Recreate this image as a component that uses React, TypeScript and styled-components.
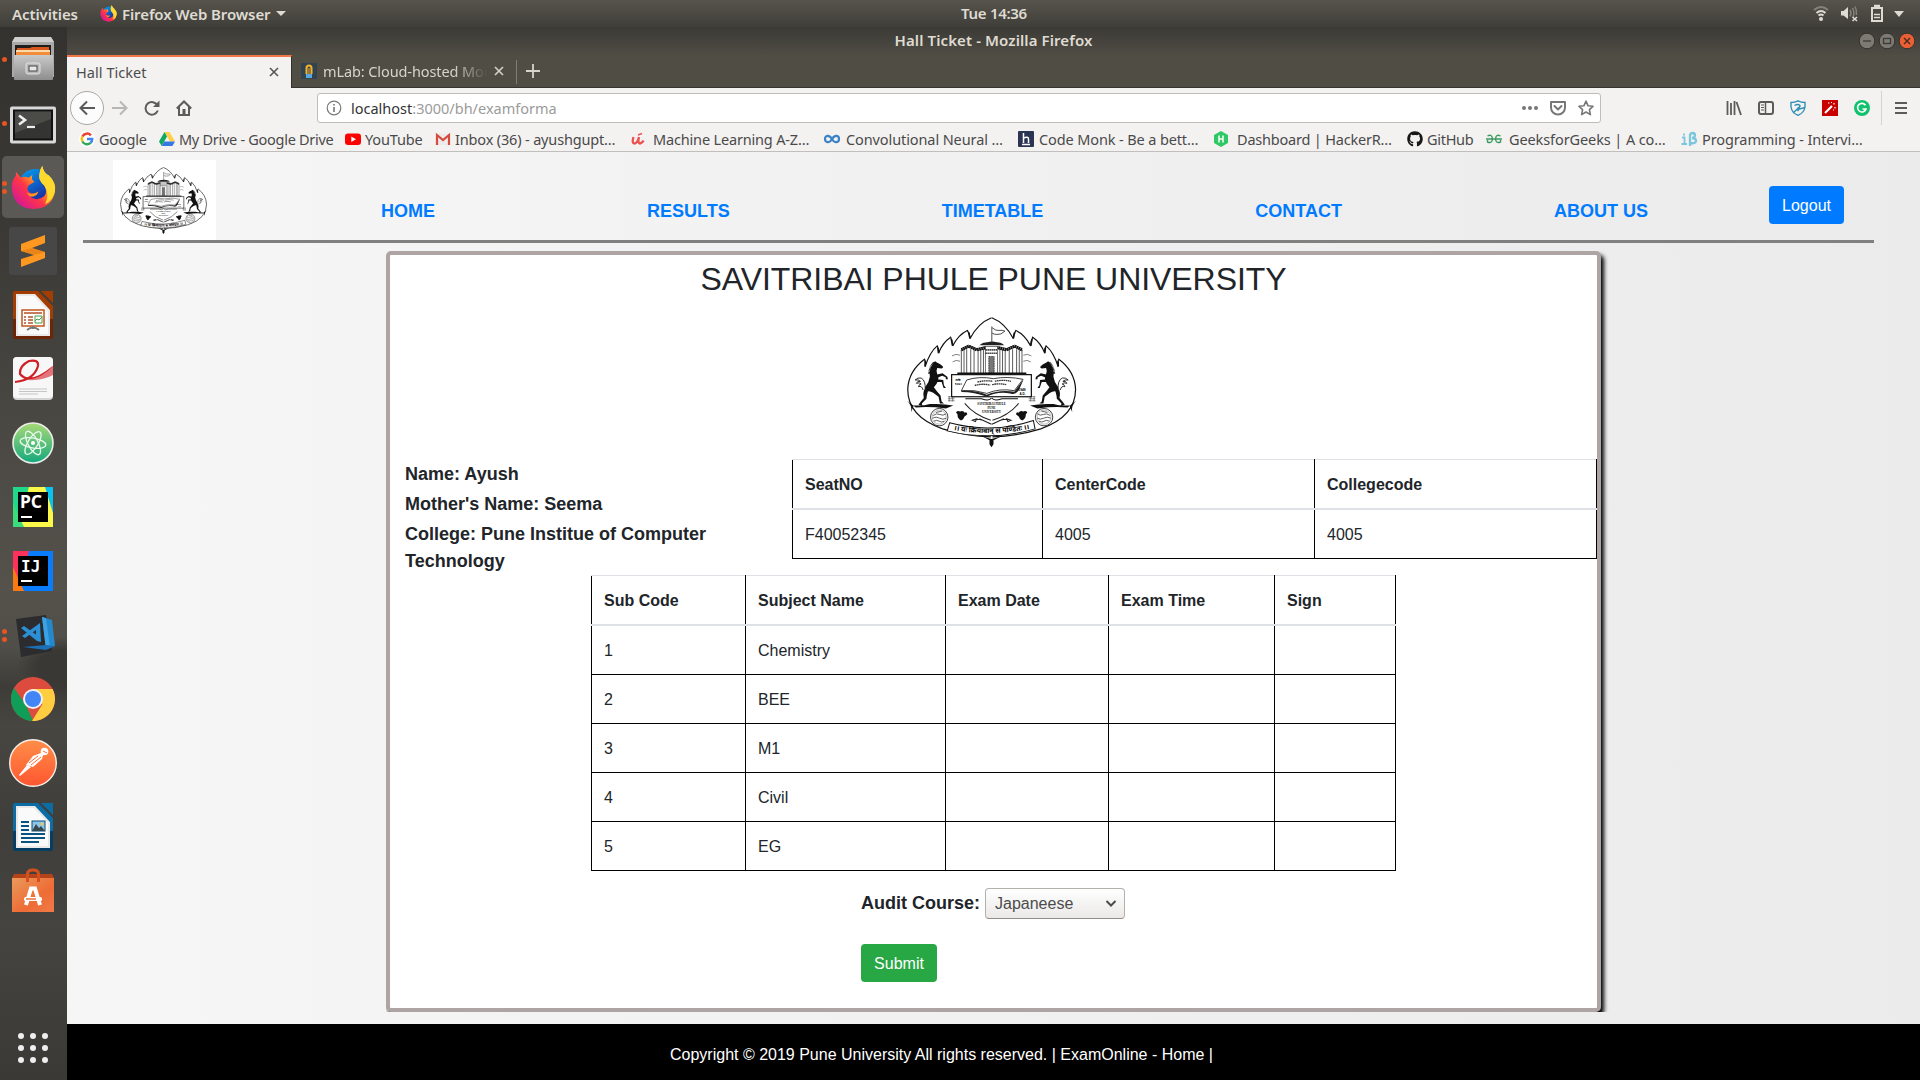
import React from 'react';
import styled, { createGlobalStyle, css } from 'styled-components';
import { FaGithub } from 'react-icons/fa';

const UI = '"Noto Sans", "Open Sans", sans-serif';
const BODY = '"Liberation Sans", Arial, sans-serif';

const GlobalStyle = createGlobalStyle`
  * { box-sizing: border-box; }
  html, body { margin: 0; padding: 0; }
  body { width: 1920px; height: 1080px; overflow: hidden; background: #3c3b37; }
  svg { display: block; flex: none; }
`;

const Desktop = styled.div`
  width: 1920px;
  height: 1080px;
  display: flex;
  flex-direction: column;
  overflow: hidden;
  font-family: ${UI};
`;

/* ---------- system bar ---------- */

const SystemBar = styled.header`
  height: 27px;
  flex: none;
  display: grid;
  grid-template-columns: 894px 200px 1fr;
  align-items: center;
  background: linear-gradient(#57544c, #3f3e39);
  color: #dfdbd2;
  font-weight: 600;
  font-size: 15px;
`;

const BarGroup = styled.div<{ $end?: boolean }>`
  display: flex;
  align-items: center;
  height: 27px;
  padding: ${p => (p.$end ? '0 16px 1px 0' : '0 0 0 12px')};
  justify-content: ${p => (p.$end ? 'flex-end' : 'flex-start')};
`;

const Label = styled.span<{ $w: number; $ls?: number; $ml?: number }>`
  width: ${p => p.$w}px;
  margin-left: ${p => p.$ml ?? 0}px;
  letter-spacing: ${p => p.$ls ?? 0}px;
  white-space: nowrap;
  flex: none;
`;

const Clock = styled.div`
  text-align: center;
  white-space: nowrap;
  letter-spacing: -0.3px;
  padding-bottom: 2px;
`;

const Caret = styled.span<{ $ml: number }>`
  margin-left: ${p => p.$ml}px;
  border: 5px solid transparent;
  border-top-color: #dfdbd2;
  border-bottom-width: 0;
`;

/* ---------- dock ---------- */

const Workspace = styled.div`
  flex: 1;
  min-height: 0;
  display: flex;
`;

const Dock = styled.nav`
  width: 67px;
  flex: none;
  display: flex;
  flex-direction: column;
  background:
    radial-gradient(ellipse 60px 40px at 62px 640px, #3a3834 40%, transparent 75%),
    linear-gradient(#33322e 0, #3a3935 200px, #4a4843 400px, #55524c 560px, #504e48 620px, #3d3c38 660px, #474641 700px, #3f3e3a 800px, #454440 900px, #3a3936 1053px);
`;

const DockItem = styled.div<{ $active?: boolean }>`
  height: 64px;
  flex: none;
  display: flex;
  align-items: center;
  position: relative;
  ${p => p.$active && css`
    &::before {
      content: '';
      position: absolute;
      left: 2px;
      top: 1px;
      width: 62px;
      height: 62px;
      border-radius: 5px;
      background: #5b5956;
    }
  `}
  svg { position: relative; }
`;

const DockSpacer = styled.div`
  flex: 1;
`;

const Running = styled.div`
  position: absolute;
  z-index: 1;
  left: 2px;
  top: 0;
  height: 64px;
  display: flex;
  flex-direction: column;
  justify-content: center;
  gap: 3px;
`;

const Dot = styled.i`
  width: 5px;
  height: 5px;
  border-radius: 50%;
  background: #e95420;
`;

/* ---------- browser chrome ---------- */

const Browser = styled.div`
  flex: 1;
  min-width: 0;
  display: flex;
  flex-direction: column;
`;

const TitleBar = styled.div`
  height: 28px;
  flex: none;
  display: grid;
  grid-template-columns: 1fr auto 1fr;
  align-items: center;
  background: linear-gradient(#3b3a36, #4f4c44);
  color: #dfdbd2;
  font-weight: 600;
  font-size: 15px;
`;

const WindowButtons = styled.div`
  display: flex;
  justify-content: flex-end;
  padding-right: 4px;
  gap: 2px;
`;

const WindowTitle = styled.div`
  white-space: nowrap;
  letter-spacing: 0.1px;
  padding-bottom: 2px;
`;

const TabStrip = styled.div`
  height: 33px;
  flex: none;
  display: flex;
  background: #504d45;
  border-bottom: 1px solid #363430;
`;

const Tab = styled.div<{ $active?: boolean }>`
  display: flex;
  align-items: center;
  height: ${p => (p.$active ? 33 : 32)}px;
  width: ${p => (p.$active ? 225 : 224)}px;
  flex: none;
  font-size: 14.5px;
  padding-left: 9px;
  ${p => p.$active
    ? css`
        background: #f4f2f1;
        color: #4c4c4c;
        border-top: 2px solid #f07746;
        border-right: 1px solid #33312c;
        margin-bottom: -1px;
        padding-bottom: 2px;
      `
    : css`
        color: #d8d4cc;
      `}
`;

const FadeLabel = styled(Label)`
  mask-image: linear-gradient(90deg, #000 80%, transparent);
`;

const TabDivider = styled.span`
  width: 1px;
  height: 24px;
  margin: 5px 9px 0 0;
  background: #7f7c74;
`;

const NavBar = styled.div`
  height: 40px;
  flex: none;
  display: flex;
  align-items: center;
  background: #f4f2f1;
  padding-left: 3px;
`;

const BackButton = styled.div`
  width: 34px;
  height: 34px;
  border-radius: 50%;
  border: 1px solid #aaa8a6;
  background: #fcfcfc;
  display: grid;
  place-items: center;
`;

const NavIcon = styled.div<{ $ml: number }>`
  margin-left: ${p => p.$ml}px;
`;

const UrlBar = styled.div`
  margin-left: 125px;
  width: 1284px;
  height: 30px;
  border: 1px solid #c0bdba;
  border-radius: 3px;
  background: #fff;
  display: flex;
  align-items: center;
  padding: 0 5px 0 8px;
  font-size: 14.5px;
  color: #9b9b9b;
  b { color: #333; font-weight: 400; }
`;

const UrlActions = styled.div`
  margin-left: auto;
  display: flex;
  align-items: center;
  gap: 12px;
`;

const Extensions = styled.div`
  display: flex;
  align-items: center;
  gap: 16px;
  margin-left: 125px;
`;

const MenuButton = styled.div`
  margin-left: 11px;
  border-left: 1px solid #d5d3d1;
  height: 34px;
  display: flex;
  align-items: center;
  padding-left: 12px;
`;

const Bookmarks = styled.div`
  height: 24px;
  flex: none;
  display: flex;
  align-items: center;
  background: #f4f2f1;
  border-bottom: 1px solid #c1bfbd;
  padding: 0 0 2px 12px;
  font-size: 14.5px;
  color: #4a4a4a;
`;

const Bookmark = styled.div<{ $w: number; $ls: number }>`
  width: ${p => p.$w}px;
  flex: none;
  display: flex;
  align-items: center;
  white-space: nowrap;
  letter-spacing: ${p => p.$ls}px;
  span { margin-left: 4px; }
`;

/* ---------- page ---------- */

const Page = styled.main`
  flex: 1;
  min-height: 0;
  display: flex;
  flex-direction: column;
  background: linear-gradient(90deg, #f6f6f6, #ebebeb);
  font-family: ${BODY};
  color: #212529;
  font-size: 16px;
  line-height: 24px;
`;

const SiteHeader = styled.div`
  margin: 8px 46px 0 16px;
  height: 83px;
  flex: none;
  border-bottom: 3px solid #808080;
  display: flex;
  padding-left: 30px;
`;

const LogoBox = styled.div`
  width: 103px;
  height: 80px;
  background: #fff;
`;

const SiteNav = styled.div`
  display: flex;
  gap: 212px;
  margin: 38px 0 0 165px;
  width: 1388px;
`;

const NavLink = styled.a`
  color: #007bff;
  font-weight: 700;
  font-size: 18px;
  line-height: 27px;
  white-space: nowrap;
`;

const Button = styled.button<{ $color: string; $w: number }>`
  width: ${p => p.$w}px;
  height: 38px;
  flex: none;
  padding: 2px 0 0;
  border: 0;
  border-radius: 4px;
  background: ${p => p.$color};
  color: #fff;
  font: 400 16px/24px ${BODY};
`;

const HeaderAction = styled.div`
  padding-top: 26px;
`;

const Card = styled.section`
  margin: 8px 0 0 319px;
  width: 1215px;
  height: 761px;
  flex: none;
  border: 4px solid #aea4a4;
  border-radius: 5px;
  background: #fff;
  box-shadow: 3px 4px 4px #000;
  clip-path: inset(0 -10px 0 0);
  display: flex;
  flex-direction: column;
  align-items: center;
`;

const CardTitle = styled.h2`
  margin: 5px 0 0;
  height: 43px;
  font-weight: 400;
  font-size: 32px;
  line-height: 38px;
  letter-spacing: -0.06px;
`;

const CardEmblem = styled.div`
  height: 156px;
`;

const InfoRow = styled.div`
  align-self: stretch;
  display: flex;
  height: 116px;
`;

const Student = styled.div`
  width: 402px;
  padding: 2px 50px 0 15px;
  font-weight: 700;
  font-size: 18px;
  line-height: 27px;
`;

const StudentLine = styled.div`
  margin-bottom: 3px;
`;

const Table = styled.table`
  border-collapse: collapse;
  table-layout: fixed;
  flex: none;
  th, td {
    padding: 2px 12px 0;
    text-align: left;
    border: 1px solid #000;
    height: 49px;
  }
  th {
    border-top-color: #dee2e6;
    border-bottom: 2px solid #dee2e6;
  }
  tbody tr:first-child td { height: 50px; }
`;

const FormArea = styled.div`
  align-self: flex-start;
  margin: 17px 0 0 471px;
`;

const FieldRow = styled.div`
  display: flex;
  align-items: center;
  gap: 5px;
  font-weight: 700;
  font-size: 18px;
  margin-bottom: 25px;
`;

const FieldLabel = styled.label`
  padding-bottom: 2px;
`;

const SelectBox = styled.div`
  width: 140px;
  height: 31px;
  border: 1px solid #b3afab;
  border-bottom-color: #928e8a;
  border-radius: 4px;
  background: linear-gradient(#fff, #ebe9e8);
  display: flex;
  align-items: center;
  justify-content: space-between;
  padding: 0 7px 0 9px;
  font-weight: 400;
  font-size: 16px;
  color: #4c4c4c;
`;

const Footer = styled.footer`
  margin-top: auto;
  height: 56px;
  flex: none;
  background: #000;
  color: #fff;
  padding: 19px 0 0 603px;
`;

/* ---------- emblem ---------- */

const Horse = () => (
  <g fill="#111" stroke="none">
    <path d="M164 187 L168 184 L173 188 Q184 192 191 200 Q193 205 187 206 Q180 204 174 204 Q170 212 174 222 Q180 234 176 244 Q172 254 164 262 Q172 274 184 286 L187 304 L194 310 L182 310 L178 290 L162 278 Q152 272 146 274 Q142 288 142 296 L128 310 L130 318 L118 314 L124 306 L134 294 Q130 278 138 262 Q150 246 152 230 Q148 208 164 187Z" />
    <path d="M170 224 L190 220 L204 230 L206 238 L200 238 L199 232 L189 227 L172 234Z" />
    <path d="M172 238 L192 240 L194 256 L200 264 L193 264 L187 246 L170 246Z" />
    <path d="M164 188 Q152 198 150 222" stroke="#111" strokeWidth="6" strokeDasharray="2.500 1.500" fill="none" />
    <path d="M138 268 Q140 242 126 234 Q116 232 108 240 Q118 238 124 244 Q114 242 112 250 Q122 246 126 252 Q120 252 118 260 Q128 256 132 270" fill="#fff" stroke="#111" strokeWidth="2.600" />
  </g>
);

const HalfFrame = () => (
  <g>
    <path d="M336 54 Q296 70 272 116 Q272 104 264 92 Q238 104 220 138 Q220 124 214 112 Q190 128 178 160 Q180 148 174 138 Q152 156 138 200 Q142 188 136 178 Q88 214 86 268 Q86 350 190 386 Q262 408 334 410" fill="none" stroke="#111" strokeWidth="3.6" />
    <path d="M268 98 L272 116 M216 118 L220 138 M176 144 L178 160 M138 184 V200" stroke="#111" strokeWidth="5" />
    <path d="M84 302 Q100 316 96 336 L104 316 Q132 318 152 312 Q190 310 222 316 L200 325 Q150 318 110 322" fill="#111" />
    <Horse />
    <circle cx="180" cy="351" r="26" fill="#fff" stroke="#111" strokeWidth="2.4" />
    <circle cx="180" cy="351" r="21" fill="none" stroke="#777" strokeWidth="1.4" />
    <path d="M162 346 q10 -8 20 -3 t18 -2 M160 354 q11 -6 21 0 t20 0 M164 363 q9 -5 16 0 t15 0 M170 337 l18 -4" fill="none" stroke="#555" strokeWidth="2.8" />
    <path d="M230 336 q6 -6 12 -2 q10 -4 14 4 q6 -4 8 4 l-9 8 q-4 12 -12 10 q-10 -8 -8 -16z" fill="#111" />
    <path d="M206 290 h20 M206 296 h20 M206 302 h20 M210 288 v16 M220 288 v16" stroke="#555" strokeWidth="2" />
    <path d="M256 310 Q286 346 334 360 M278 360 Q300 352 330 370 M278 360 L292 356 L288 364Z M300 356 L336 372" fill="none" stroke="#222" strokeWidth="3" />
    <path d="M258 296 h48 q24 8 30 -2" fill="none" stroke="#111" strokeWidth="3" />
    <path d="M246 146 L268 136 L292 146 L320 140 M244 152 L268 142 L296 152 L320 146 M246 152 V220 M254 150 V220 M262 148 V220 M274 148 V220 M284 150 V220 M296 152 V220 M304 150 V220 M312 148 V220" fill="none" stroke="#333" strokeWidth="2.4" />
    <path d="M246 150 L268 139 L292 150 L320 143" fill="none" stroke="#111" strokeWidth="9" strokeDasharray="5 1.500" />
    <path d="M218 168 q12 -8 24 -2 M220 186 q10 -8 22 -2" fill="none" stroke="#444" strokeWidth="2" />
  </g>
);

const Emblem = ({ width, height }: { width: number; height: number }) => (
  <svg width={width} height={height} viewBox="42 10 600 466" preserveAspectRatio="none">
    <HalfFrame />
    <g transform="translate(673 0) scale(-1 1)">
      <HalfFrame />
    </g>
    <path d="M337 126 V80 M338 84 q12 10 20 8 q10 -2 18 2 q-12 12 -24 10 q-8 0 -14 -4" fill="none" stroke="#222" strokeWidth="2.4" />
    <path d="M300 136 q10 -10 24 -9 q14 -4 28 0 q14 0 22 9z" fill="#222" />
    <path d="M318 140 h36 v80 h-36z" fill="#fff" stroke="#333" strokeWidth="2" />
    <path d="M318 150 h36 M318 160 h36" stroke="#222" strokeWidth="5" strokeDasharray="4 2" />
    <path d="M328 170 h16 v48 h-16z" fill="#777" stroke="#111" strokeWidth="2" strokeDasharray="5 2" />
    <path d="M234 220 h206" stroke="#111" strokeWidth="5" />
    <rect x="217" y="224" width="238" height="66" fill="#fff" stroke="#111" strokeWidth="3.6" />
    <path d="M246 272 L262 240 Q300 228 342 236 Q384 228 430 238 L404 272 Q360 264 322 280 Q286 268 246 272Z" fill="#fff" stroke="#111" strokeWidth="2.4" />
    <path d="M246 272 Q286 270 322 284 Q360 268 404 275 L432 238 L418 270 Q408 286 392 280 Q352 274 322 290 Q286 276 246 276Z" fill="#222" />
    <path d="M294 246 q24 -6 46 -2 M346 244 q24 -6 48 0 M286 256 q24 -6 46 -1 M338 254 q20 -5 42 0" fill="none" stroke="#333" strokeWidth="4" strokeDasharray="5 1.500" />
    <text x="228" y="242" fontSize="10" fontWeight="700" fontFamily={UI}>शके</text>
    <text x="226" y="254" fontSize="10" fontWeight="700" fontFamily={UI}>१८७०</text>
    <text x="416" y="272" fontSize="10" fontWeight="700" fontFamily={BODY}>1949</text>
    <text x="420" y="284" fontSize="9" fontWeight="700" fontFamily={BODY}>A.D.</text>
    <text x="336" y="315" textAnchor="middle" fontSize="9" fontWeight="700" fontFamily="Liberation Serif, serif">SAVITRIBAI PHULE</text>
    <text x="336" y="327" textAnchor="middle" fontSize="9" fontWeight="700" fontFamily="Liberation Serif, serif">PUNE</text>
    <text x="336" y="339" textAnchor="middle" fontSize="9" fontWeight="700" fontFamily="Liberation Serif, serif">UNIVERSITY</text>
    <path d="M211 368 Q336 402 461 361 L466 386 Q336 424 204 392Z" fill="#fff" stroke="#111" strokeWidth="3" />
    <path id="ribbon" d="M208 387 Q336 412 464 383" fill="none" />
    <text fontSize="21" fontWeight="700" fontFamily={UI}>
      <textPath href="#ribbon" startOffset="50%" textAnchor="middle">।। यः क्रियावान् स पण्डितः ।।</textPath>
    </text>
    <path d="M308 408 L336 416 L366 408 L342 420 V432 L336 441 L330 432 V420Z" fill="#111" />
  </svg>
);

/* ---------- drawings ---------- */

const FirefoxLogo = ({ size }: { size: number }) => (
  <svg width={size} height={size} viewBox="0 0 46 46">
    <defs>
      <linearGradient id="fxTail" x1="0.9" y1="0.1" x2="0.1" y2="0.9">
        <stop offset="0" stopColor="#fff44f" />
        <stop offset="0.35" stopColor="#ffa31c" />
        <stop offset="0.6" stopColor="#ff3647" />
        <stop offset="1" stopColor="#d3159b" />
      </linearGradient>
      <linearGradient id="fxGlobe" x1="0" y1="0" x2="0.6" y2="1">
        <stop offset="0" stopColor="#00a4f5" />
        <stop offset="1" stopColor="#1c2aa0" />
      </linearGradient>
    </defs>
    <circle cx="25" cy="21" r="17" fill="url(#fxGlobe)" />
    <path d="M5 7 L10 13 Q14 11 18 13 L22 10 Q20 15 24 17 L18 21 Q15 25 19 28 Q24 31 28 27 Q26 33 19 32 Q26 38 34 32 Q38 27 34 21 Q28 16 29 10 Q29 5 32 1 Q33 8 39 11 Q46 18 45 27 Q42 44 23 45 Q3 44 1 25 Q0 16 5 11Z" fill="url(#fxTail)" />
    <path d="M32 1 Q33 8 39 11 Q46 18 45 26 Q43 36 35 40 Q40 30 34 21 Q28 16 29 10 Q29 5 32 1Z" fill="#ffd92e" />
    <path d="M16 28 Q22 31 28 27 Q26 33 19 32Z" fill="#ff9a1c" />
  </svg>
);

const S = ({ children }: { children: React.ReactNode }) => (
  <svg width="67" height="64" viewBox="0 0 67 64">{children}</svg>
);

const FilesIcon = () => (
  <S>
    <defs>
      <linearGradient id="cab" x1="0" y1="0" x2="0" y2="1">
        <stop offset="0" stopColor="#c9c9c9" /><stop offset="1" stopColor="#8e8e8e" />
      </linearGradient>
    </defs>
    <path d="M15 10 H51 L54 15 V50 H12 V15Z" fill="#a9a9a9" />
    <path d="M15 10 H51 L54 15 H12Z" fill="#cfcfcf" />
    <rect x="15" y="18" width="36" height="11" fill="#1e1e1c" />
    <path d="M17 21 H30 L32 20 H49 V29 H17Z" fill="#d9581d" />
    <rect x="16" y="23" width="34" height="2" fill="#fbd9a8" />
    <rect x="16" y="25" width="34" height="4" fill="#f08c3a" />
    <rect x="14" y="28" width="39" height="25" rx="1" fill="url(#cab)" />
    <rect x="26" y="36" width="14" height="11" rx="2" fill="#b9b9b9" stroke="#e2e2e2" />
    <rect x="29" y="39" width="8" height="5" fill="#e8e8e8" stroke="#444" />
  </S>
);

const TerminalIcon = () => (
  <S>
    <rect x="10" y="15.500" width="46" height="37" rx="2" fill="#d8d8d8" />
    <rect x="13" y="18.500" width="40" height="31" fill="#111" />
    <rect x="15" y="20.500" width="36" height="27" fill="#343432" />
    <path d="M15 20.500 H51 V28 L15 42Z" fill="#4b4b48" />
    <path d="M19 24.500 L25 29 L19 33.500" fill="none" stroke="#eee" strokeWidth="2.6" />
    <path d="M27 36 H35" stroke="#eee" strokeWidth="2.2" />
  </S>
);

const SublimeIcon = () => (
  <S>
    <rect x="9" y="8" width="48" height="48" rx="3" fill="#474747" />
    <path d="M21 25 L45 16 V24 L32 29 L45 33 V39 L21 48 V40 L34 36 L21 32Z" fill="#ff9820" />
    <path d="M21 32 L34 36 L45 33 L32 29Z" fill="#d87710" opacity="0.55" />
  </S>
);

const DocBase = ({ light, dark }: { light: string; dark: string }) => (
  <>
    <path d="M15 8 H38 L53 23 V54 Q53 56 51 56 H15 Q13 56 13 54 V10 Q13 8 15 8Z" fill={dark} />
    <path d="M15 8 H38 L53 23 V36 H13 V10 Q13 8 15 8Z" fill={light} />
    <path d="M41 8 H53 V20Z" fill={light} />
    <path d="M16 11 H35 L50 27 V53 H16Z" fill="#e9e9e9" />
    <path d="M18 13 H34 L48 28 V51 H18Z" fill="#fafafa" />
  </>
);

const ImpressIcon = () => (
  <S>
    <DocBase light="#a33e03" dark="#6c2506" />
    <rect x="22" y="27" width="22" height="16" fill="#fff" stroke="#c4561b" strokeWidth="1.5" />
    <path d="M24 30 H42 M24 34 h2 M24 37 h2 M24 40 h2 M28 34 h5 M28 37 h5 M28 40 h5" stroke="#b4532a" strokeWidth="1.6" />
    <path d="M35 40 V33 H42 V40Z M35 38 L37 36 L39 37 L42 34" fill="none" stroke="#43a04a" />
    <path d="M33 43 V46 M27 47 Q33 42 39 47" fill="none" stroke="#777" strokeWidth="1.8" />
  </S>
);

const PdfIcon = () => (
  <S>
    <rect x="13" y="10" width="40" height="43" rx="4" fill="#d4d4d4" />
    <rect x="13" y="10" width="40" height="41" rx="4" fill="#f7f7f7" />
    <path d="M15 35 Q34 33 38 19 Q39 12 29 14 Q19 19 20 27 Q30 39 53 20" fill="none" stroke="#cf2026" strokeWidth="2.2" />
    <path d="M28 33 Q42 31 53 19 V28 Q42 34 28 33Z" fill="#e5737a" />
    <path d="M19 42 H47 M19 44.500 H47 M19 47 H38" stroke="#c4c4c4" />
  </S>
);

const AtomIcon = () => (
  <S>
    <defs>
      <linearGradient id="atom" x1="0" y1="0" x2="0" y2="1">
        <stop offset="0" stopColor="#a8d977" /><stop offset="1" stopColor="#13a97c" />
      </linearGradient>
    </defs>
    <circle cx="33" cy="32" r="20" fill="url(#atom)" stroke="#ededed" strokeWidth="1.6" />
    <g fill="none" stroke="#e9f7ee" strokeWidth="1.3">
      <ellipse cx="33" cy="32" rx="13" ry="5" transform="rotate(10 33 32)" />
      <ellipse cx="33" cy="32" rx="13" ry="5" transform="rotate(62 33 32)" />
      <ellipse cx="33" cy="32" rx="13" ry="5" transform="rotate(122 33 32)" />
    </g>
    <circle cx="33" cy="32" r="2" fill="#fff" />
  </S>
);

const JetIcon = ({ text, colors }: { text: string; colors: string[] }) => (
  <S>
    <rect x="13" y="12" width="40" height="40" fill={colors[0]} />
    <path d="M29 12 H46 L53 36 V52 H18Z" fill={colors[1]} />
    <path d="M45 12 H53 V38Z" fill={colors[2]} />
    <path d="M13 28 L24 52 H13Z" fill={colors[3]} />
    <rect x="18" y="17" width="30" height="30" fill="#000" />
    <text
      x={text === 'IJ' ? 21 : 20}
      y="33"
      fill="#fff"
      fontSize={text === 'IJ' ? 16 : 17.5}
      fontWeight="700"
      fontFamily={text === 'IJ' ? '"DejaVu Sans Mono", monospace' : UI}
    >
      {text}
    </text>
    <rect x="21" y="41" width="11" height="2" fill="#fff" />
  </S>
);

const CodeIcon = () => (
  <S>
    <path d="M16 16 L46 12 L52 48 L21 54Z" fill="#2c2b2e" />
    <path d="M42 14 L52 17 L55 43 L46 46Z" fill="#2489ca" />
    <path d="M42 14 L46 46 L50 45 L46 15Z" fill="#3ba2e6" />
    <path d="M23 44 L46 42 L55 43 L46 47Z" fill="#1b6fb5" />
    <path d="M40 20 L41 39 L37 38 L21 25 L24 23 L36 31.500 V27 L25 35 L22 33Z" fill="#2b8fd6" />
  </S>
);

const ChromeIcon = () => (
  <S>
    <circle cx="33" cy="32" r="22" fill="#dd4b3e" />
    <path d="M14 21 L26 38 L33 54 A22 22 0 0 1 14 21Z" fill="#0f9d58" />
    <path d="M33 22 H52.600 A22 22 0 0 1 32 54 L42.500 37Z" fill="#ffcd40" />
    <circle cx="33" cy="32" r="10" fill="#f1f1f1" />
    <circle cx="33" cy="32" r="8" fill="#4285f4" />
  </S>
);

const PostmanIcon = () => (
  <S>
    <defs>
      <linearGradient id="pm" x1="0" y1="0" x2="0" y2="1">
        <stop offset="0" stopColor="#ff8e48" /><stop offset="1" stopColor="#ff5630" />
      </linearGradient>
    </defs>
    <circle cx="33" cy="32" r="23.300" fill="url(#pm)" stroke="#f5efec" strokeWidth="1.4" />
    <circle cx="44.500" cy="20.500" r="3.800" fill="#fff" />
    <path d="M41 22 L33 25 L26 34 L33 36 L42 28 L43 24Z" fill="#fff" />
    <path d="M27 34 L19 44 L20 45 L31 36Z" fill="#fff" />
    <path d="M29 32 L38 25 M31 34 L41 26" stroke="#ff6c37" strokeWidth="1" />
    <path d="M43 20 L47 22" stroke="#ff6c37" />
  </S>
);

const WriterIcon = () => (
  <S>
    <DocBase light="#0e6ca5" dark="#063e63" />
    <path d="M21 27 H29 M21 31 H29 M21 35 H29 M21 39 H45 M21 43 H45 M21 47 H39" stroke="#0a5481" strokeWidth="2" />
    <rect x="32" y="26" width="13" height="10" fill="#8ec6ea" stroke="#0a4e7a" />
    <path d="M32 36 L36 29 L39 33 L41 31 L45 36Z" fill="#37474f" />
    <circle cx="42" cy="29" r="1.500" fill="#f5c451" />
  </S>
);

const SoftwareIcon = () => (
  <S>
    <defs>
      <linearGradient id="sw" x1="0" y1="0" x2="1" y2="1">
        <stop offset="0" stopColor="#ea9a5c" /><stop offset="0.6" stopColor="#ee6c35" /><stop offset="1" stopColor="#f07a48" />
      </linearGradient>
    </defs>
    <path d="M14 15 H52 L54 19 H12Z" fill="#b4431a" />
    <rect x="12" y="19" width="42" height="34" fill="url(#sw)" />
    <path d="M27.500 23 V15 Q27.500 11 33 11 Q38.500 11 38.500 15 V23" fill="none" stroke="#d5501f" strokeWidth="3" />
    <path d="M26 46 L31 29.500 H35 L40 46" fill="none" stroke="#fff" strokeWidth="4" />
    <rect x="24" y="38" width="18" height="4" rx="1.500" fill="#fff" />
    <rect x="26" y="39.300" width="10" height="1.400" fill="#e9672f" />
  </S>
);

const AppGrid = () => (
  <S>
    {[0, 1, 2].map(r => [0, 1, 2].map(c => (
      <circle key={`${r}${c}`} cx={21 + c * 12} cy={20 + r * 12} r="3" fill="#efefef" />
    )))}
  </S>
);

const stroke = { fill: 'none', stroke: '#5b5b5b', strokeWidth: 2 } as const;

const CloseGlyph = ({ color }: { color: string }) => (
  <svg width="10" height="10" viewBox="0 0 10 10"><path d="M1 1 L9 9 M9 1 L1 9" stroke={color} strokeWidth="1.6" /></svg>
);

const dock: { icon: React.ReactNode; running?: number; active?: boolean }[] = [
  { icon: <FilesIcon />, running: 1 },
  { icon: <TerminalIcon />, running: 1 },
  { icon: null, running: 2, active: true },
  { icon: <SublimeIcon /> },
  { icon: <ImpressIcon /> },
  { icon: <PdfIcon /> },
  { icon: <AtomIcon /> },
  { icon: <JetIcon text="PC" colors={['#21d789', '#fcf84a', '#07c3f2', '#3bdc7c']} /> },
  { icon: <JetIcon text="IJ" colors={['#fe315d', '#087cfa', '#087cfa', '#f97a12']} /> },
  { icon: <CodeIcon />, running: 2 },
  { icon: <ChromeIcon /> },
  { icon: <PostmanIcon /> },
  { icon: <WriterIcon /> },
  { icon: <SoftwareIcon /> },
];

const FirefoxDock = styled.div`
  position: relative;
  padding-left: 11px;
`;

const B = ({ children, w = 16 }: { children: React.ReactNode; w?: number }) => (
  <svg width={w} height="16" viewBox={`0 0 ${w} 16`}>{children}</svg>
);

const GoogleG = () => (
  <B>
    <circle cx="8" cy="8" r="8" fill="#fff" />
    <g fill="none" strokeWidth="2.500">
      <path d="M11.900 4.300 A5.200 5.200 0 0 0 3.400 5.500" stroke="#ea4335" />
      <path d="M3.400 5.500 A5.200 5.200 0 0 0 3.400 10.500" stroke="#fbbc05" />
      <path d="M3.400 10.500 A5.200 5.200 0 0 0 11.600 11.800" stroke="#34a853" />
      <path d="M11.600 11.800 A5.200 5.200 0 0 0 13.200 8 H8" stroke="#4285f4" />
    </g>
  </B>
);

const bookmarks: { icon: React.ReactNode; label: string; w: number; ls: number }[] = [
  { label: 'Google', w: 80, ls: -0.2, icon: <GoogleG /> },
  {
    label: 'My Drive - Google Drive', w: 186, ls: -0.28,
    icon: <B><path d="M5.500 1 H10.500 L16 10.500 H11Z" fill="#ffcf48" /><path d="M5.500 1 L8 5.500 L2.700 15 L0 10.500Z" fill="#11a861" /><path d="M5.300 10.500 H16 L13.400 15 H2.700Z" fill="#3777e3" /></B>,
  },
  {
    label: 'YouTube', w: 90, ls: -0.15,
    icon: <B><rect x="0" y="2.500" width="16" height="11.500" rx="3" fill="#f00" /><path d="M6.300 5.500 L11 8.200 L6.300 11Z" fill="#fff" /></B>,
  },
  {
    label: 'Inbox (36) - ayushgupt…', w: 196, ls: -0.16,
    icon: <B><rect x="1" y="3" width="14" height="11" fill="#eceaea" /><path d="M2 14 V4 L8 9 L14 4 V14" fill="none" stroke="#d54b3d" strokeWidth="2.200" /></B>,
  },
  {
    label: 'Machine Learning A-Z…', w: 193, ls: -0.17,
    icon: <B w={18}><path d="M2.500 6 Q0.500 12.500 3.500 12.500 Q6.500 12 8 6 Q6.500 12 9 12.500 Q11.500 12 12.500 9.500" fill="none" stroke="#ec5252" strokeWidth="2.300" /><path d="M7 4 L11 2.500" stroke="#ec5252" strokeWidth="1.600" /></B>,
  },
  {
    label: 'Convolutional Neural …', w: 194, ls: -0.1,
    icon: <B w={18}><path d="M8 8 C5 3 1 4.500 1 8 S5 13 8 8 S15 4.500 15 8 S11 13 8 8Z" fill="none" stroke="#3b82c9" strokeWidth="2.200" /></B>,
  },
  {
    label: 'Code Monk - Be a bett…', w: 196, ls: -0.12,
    icon: <B w={17}><rect width="16" height="16" rx="1" fill="#2c3454" /><path d="M5.500 2 V12 M5.500 7 Q10.500 5 10.500 8 V12 M4 13.500 H12" fill="none" stroke="#fff" strokeWidth="1.500" /></B>,
  },
  {
    label: 'Dashboard | HackerR…', w: 193, ls: -0.2,
    icon: <B w={19}><path d="M7 0 L14 4 V12 L7 16 L0 12 V4Z" fill="#2ec866" /><path d="M5 4.500 V11.500 M9 4.500 V11.500 M5 8 H9" stroke="#fff" strokeWidth="1.500" /></B>,
  },
  { label: 'GitHub', w: 79, ls: -0.3, icon: <FaGithub size={16} color="#191717" /> },
  {
    label: 'GeeksforGeeks | A co…', w: 195, ls: -0.1,
    icon: <B w={19}><path d="M1.500 5 Q6 2.500 6.500 8 Q6 13 1.500 11 V9 M0 8 H16 M14.500 5 Q10 2.500 9.500 8 Q10 13 14.500 11 V9" fill="none" stroke="#3a9a5f" strokeWidth="1.400" /></B>,
  },
  {
    label: 'Programming - Intervi…', w: 190, ls: -0.1,
    icon: <B w={17}><path d="M1 6.500 H3.500 V13 M0.500 13 H6 M3 2.500 V4.500" fill="none" stroke="#79c6dd" strokeWidth="1.800" /><path d="M9 15 V4.500 Q9 2 11.800 2 Q14 2.200 14 4.500 Q13.800 6.800 11 7 Q15 7 15 10 Q14.500 13 9.500 12" fill="none" stroke="#79c6dd" strokeWidth="2.300" /></B>,
  },
];

const subjects = ['Chemistry', 'BEE', 'M1', 'Civil', 'EG'];

export default function App() {
  return (
    <Desktop>
      <GlobalStyle />
      <SystemBar>
        <BarGroup>
          <Label $w={88} $ls={-0.1}>Activities</Label>
          <FirefoxLogo size={17} />
          <Label $w={150} $ml={5} $ls={-0.1}>Firefox Web Browser</Label>
          <Caret $ml={4} />
        </BarGroup>
        <Clock>Tue 14:36</Clock>
        <BarGroup $end>
          <svg width="91" height="20" viewBox="0 0 91 20">
            <g fill="none" strokeWidth="2">
              <path d="M1 7 Q8 1 15 7" stroke="#85827b" />
              <path d="M3.500 10 Q8 6 12.500 10 M5.500 12.500 Q8 10.500 10.500 12.500" stroke="#dfdbd2" />
            </g>
            <circle cx="8" cy="16" r="2" fill="#dfdbd2" />
            <path d="M28 8 H30.500 L35 4 V16 L30.500 12.500 H28Z" fill="#dfdbd2" />
            <path d="M37 7 Q39 10 37 13.500 M39.500 5 Q42 10 40 14 M42 3.500 Q44 7 43.500 12" fill="none" stroke="#85827b" strokeWidth="1.500" />
            <path d="M39.500 14 L44 18 M44 14 L39.500 18" stroke="#dfdbd2" strokeWidth="1.600" />
            <path d="M59 5 H69 V18 H59Z" fill="none" stroke="#dfdbd2" strokeWidth="2" />
            <path d="M61 3 H67" stroke="#dfdbd2" strokeWidth="2.500" />
            <path d="M61 11.500 H67 M61 14.500 H67" stroke="#dfdbd2" strokeWidth="1.300" />
            <path d="M81 8 H91 L86 14Z" fill="#dfdbd2" />
          </svg>
        </BarGroup>
      </SystemBar>

      <Workspace>
        <Dock>
          {dock.map((d, i) => (
            <DockItem key={i} $active={d.active}>
              {d.running && <Running>{Array.from({ length: d.running }, (_, n) => <Dot key={n} />)}</Running>}
              {d.icon ?? <FirefoxDock><FirefoxLogo size={45} /></FirefoxDock>}
            </DockItem>
          ))}
          <DockSpacer />
          <DockItem><AppGrid /></DockItem>
        </Dock>

        <Browser>
          <TitleBar>
            <span />
            <WindowTitle>Hall Ticket - Mozilla Firefox</WindowTitle>
            <WindowButtons>
              <svg width="18" height="18" viewBox="0 0 18 18"><circle cx="9" cy="9" r="7.800" fill="#7c7a73" stroke="#34332f" /><path d="M5 9 H13" stroke="#3b3a36" strokeWidth="1.300" /></svg>
              <svg width="18" height="18" viewBox="0 0 18 18"><circle cx="9" cy="9" r="7.800" fill="#7c7a73" stroke="#34332f" /><rect x="5.500" y="6.500" width="7" height="5" fill="none" stroke="#3b3a36" strokeWidth="1.300" /></svg>
              <svg width="18" height="18" viewBox="0 0 18 18"><circle cx="9" cy="9" r="7.800" fill="#ea5f34" stroke="#34332f" /><path d="M6 6 L12 12 M12 6 L6 12" stroke="#4a2a1d" strokeWidth="1.400" /></svg>
            </WindowButtons>
          </TitleBar>

          <TabStrip>
            <Tab $active>
              <Label $w={193} $ls={0.05}>Hall Ticket</Label>
              <CloseGlyph color="#555" />
            </Tab>
            <Tab>
              <svg width="16" height="16" viewBox="0 0 16 16"><rect width="16" height="16" fill="#33424f" /><path d="M5.500 11 V5 Q5.500 2.500 8 2.500 Q10.500 2.500 10.500 5 V11" fill="none" stroke="#f3b22b" strokeWidth="2" /><path d="M8 5 V11" stroke="#f3b22b" /><rect x="5" y="11" width="6" height="4" fill="#5aa7de" /></svg>
              <FadeLabel $w={164} $ml={6} $ls={-0.1}>mLab: Cloud-hosted Mon</FadeLabel>
              <NavIcon $ml={7}><CloseGlyph color="#d8d4cc" /></NavIcon>
            </Tab>
            <TabDivider />
            <svg width="14" height="32" viewBox="0 0 14 32"><path d="M0 16 H14 M7 9 V23" stroke="#d8d4cc" strokeWidth="1.800" /></svg>
          </TabStrip>

          <NavBar>
            <BackButton>
              <svg width="16" height="16" viewBox="0 0 16 16"><path d="M16 8 H2 M8 1.500 L1.500 8 L8 14.500" {...stroke} /></svg>
            </BackButton>
            <NavIcon $ml={8}><svg width="16" height="16" viewBox="0 0 16 16"><path d="M0 8 H14 M8 1.500 L14.500 8 L8 14.500" {...stroke} stroke="#b9b7b5" /></svg></NavIcon>
            <NavIcon $ml={16}><svg width="16" height="16" viewBox="0 0 16 16"><path d="M13.500 5.500 A6.300 6.300 0 1 0 13.800 10.500" {...stroke} /><path d="M15.500 0.500 V7 H9Z" fill="#5b5b5b" /></svg></NavIcon>
            <NavIcon $ml={16}><svg width="16" height="16" viewBox="0 0 16 16"><path d="M0.800 8.500 L8 1.500 L15.200 8.500 M3 7 V15 H13 V7" {...stroke} /><rect x="6.500" y="9" width="3" height="6" fill="#5b5b5b" /></svg></NavIcon>
            <UrlBar>
              <svg width="16" height="16" viewBox="0 0 16 16"><circle cx="8" cy="8" r="6.800" fill="none" stroke="#777" strokeWidth="1.200" /><path d="M8 7 V12 M8 4 V5.600" stroke="#777" strokeWidth="1.600" /></svg>
              <Label $w={240} $ml={9} $ls={0}><b>localhost</b>:3000/bh/examforma</Label>
              <UrlActions>
                <svg width="16" height="16" viewBox="0 0 16 16" fill="#777"><circle cx="2" cy="8" r="2" /><circle cx="8" cy="8" r="2" /><circle cx="14" cy="8" r="2" /></svg>
                <svg width="16" height="16" viewBox="0 0 16 16"><path d="M1 2 H15 V7.500 A7 7 0 0 1 1 7.500Z M4.500 6 L8 9.500 L11.500 6" {...stroke} stroke="#777" strokeLinejoin="round" strokeLinecap="round" /></svg>
                <svg width="17" height="16" viewBox="0 0 17 16"><path d="M8 1.200 L10.100 5.800 L15 6.300 L11.400 9.600 L12.400 14.600 L8 12 L3.600 14.600 L4.600 9.600 L1 6.300 L5.900 5.800Z" {...stroke} stroke="#777" strokeWidth="1.600" strokeLinejoin="round" /></svg>
              </UrlActions>
            </UrlBar>
            <Extensions>
              <svg width="16" height="16" viewBox="0 0 16 16"><path d="M1.500 1 V15 M5 3 V15 M8.500 1 V15 M10.500 2 L15 15" {...stroke} strokeWidth="1.800" /></svg>
              <svg width="16" height="16" viewBox="0 0 16 16"><rect x="1" y="2" width="14" height="12" rx="2" {...stroke} /><path d="M7.500 2 V14" {...stroke} strokeWidth="1.500" /><path d="M3 5 H6 M3 7.500 H6 M3 10 H6" {...stroke} strokeWidth="1.200" /></svg>
              <svg width="16" height="16" viewBox="0 0 16 16"><path d="M1 2.500 Q5 2.500 8 0.800 Q11 2.500 15 2.500 V7 Q14 13 8 15.300 Q2 13 1 7Z M3 13 L10 6.500 M7.500 11 L9 9 L15 7.500 M4.500 5.500 Q8 3.500 10 5.500 Q10 8 7.500 8" fill="none" stroke="#2f8fb5" strokeWidth="1.400" /></svg>
              <svg width="16" height="16" viewBox="0 0 16 16"><rect width="16" height="16" fill="#c80000" /><path d="M3 13 L10 6" stroke="#fff" strokeWidth="2.200" /><path d="M6 3 h1.500 M9 2.500 h1 M12 3 v1.500 M13 7 v1.500 M11 10 h1" stroke="#fff" strokeWidth="1.200" /></svg>
              <svg width="16" height="16" viewBox="0 0 16 16"><circle cx="8" cy="8" r="8" fill="#11c26d" /><path d="M11.500 5.300 A4.300 4.300 0 1 0 12 9 H8.500" fill="none" stroke="#fff" strokeWidth="1.700" /></svg>
            </Extensions>
            <MenuButton>
              <svg width="14" height="14" viewBox="0 0 14 14"><path d="M1 2 H13 M1 7 H13 M1 12 H13" {...stroke} /></svg>
            </MenuButton>
          </NavBar>

          <Bookmarks>
            {bookmarks.map(b => (
              <Bookmark key={b.label} $w={b.w} $ls={b.ls}>{b.icon}<span>{b.label}</span></Bookmark>
            ))}
          </Bookmarks>

          <Page>
            <SiteHeader>
              <LogoBox><Emblem width={103} height={80} /></LogoBox>
              <SiteNav>
                {['HOME', 'RESULTS', 'TIMETABLE', 'CONTACT', 'ABOUT US'].map(t => <NavLink key={t}>{t}</NavLink>)}
              </SiteNav>
              <HeaderAction><Button $color="#007bff" $w={75}>Logout</Button></HeaderAction>
            </SiteHeader>

            <Card>
              <CardTitle>SAVITRIBAI PHULE PUNE UNIVERSITY</CardTitle>
              <CardEmblem><Emblem width={201} height={156} /></CardEmblem>
              <InfoRow>
                <Student>
                  <StudentLine>Name: Ayush</StudentLine>
                  <StudentLine>Mother's Name: Seema</StudentLine>
                  <StudentLine>College: Pune Institue of Computer Technology</StudentLine>
                </Student>
                <div>
                  <Table>
                    <colgroup><col width="250" /><col width="272" /><col width="282" /></colgroup>
                    <thead><tr><th>SeatNO</th><th>CenterCode</th><th>Collegecode</th></tr></thead>
                    <tbody><tr><td>F40052345</td><td>4005</td><td>4005</td></tr></tbody>
                  </Table>
                </div>
              </InfoRow>
              <Table>
                <colgroup><col width="154" /><col width="200" /><col width="163" /><col width="166" /><col width="121" /></colgroup>
                <thead><tr><th>Sub Code</th><th>Subject Name</th><th>Exam Date</th><th>Exam Time</th><th>Sign</th></tr></thead>
                <tbody>
                  {subjects.map((s, i) => (
                    <tr key={s}><td>{i + 1}</td><td>{s}</td><td /><td /><td /></tr>
                  ))}
                </tbody>
              </Table>
              <FormArea>
                <FieldRow>
                  <FieldLabel>Audit Course:</FieldLabel>
                  <SelectBox>
                    Japaneese
                    <svg width="12" height="8" viewBox="0 0 12 8"><path d="M1.500 1 L6 5.500 L10.500 1" fill="none" stroke="#4c4c4c" strokeWidth="2" /></svg>
                  </SelectBox>
                </FieldRow>
                <Button $color="#28a745" $w={76}>Submit</Button>
              </FormArea>
            </Card>

            <Footer>Copyright © 2019 Pune University All rights reserved. | ExamOnline - Home |</Footer>
          </Page>
        </Browser>
      </Workspace>
    </Desktop>
  );
}
